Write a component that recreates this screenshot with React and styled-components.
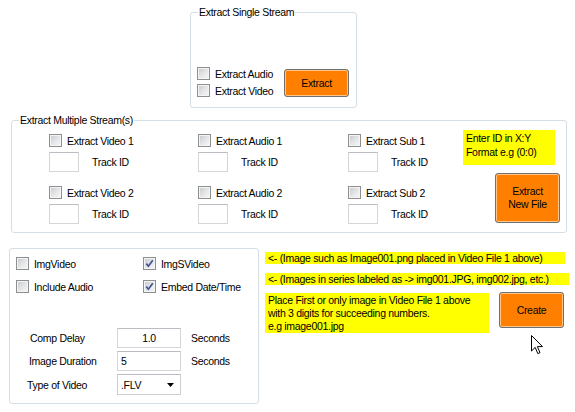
import React from 'react';
import styled, { createGlobalStyle } from 'styled-components';

const GlobalStyle = createGlobalStyle`
  html, body {
    margin: 0;
    padding: 0;
    background: #fff;
  }
  body {
    font-family: "Liberation Sans", Arial, sans-serif;
    font-size: 10.5px;
    letter-spacing: -0.3px;
    color: #000;
  }
`;

const Form = styled.div`
  position: relative;
  width: 575px;
  height: 412px;
  overflow: hidden;
  box-sizing: border-box;
  padding-top: 6px;
  background: #fff;
  display: flex;
  flex-direction: column;
  align-items: flex-start;
`;

const GroupBox = styled.fieldset`
  margin: 0;
  padding: 0;
  min-width: 0;
  box-sizing: border-box;
  border: 1px solid #d5dfe5;
  border-radius: 3px;
`;

const GroupTitle = styled.legend`
  margin-left: 7px;
  padding: 0 1px;
  height: 13px;
  line-height: 13px;
`;

/* ---------- shared controls ---------- */

const CheckRow = styled.label`
  display: flex;
  align-items: center;
  gap: 5px;
  height: 17px;
  white-space: nowrap;
`;

const Box = styled.span`
  position: relative;
  flex: none;
  width: 13px;
  height: 13px;
  box-sizing: border-box;
  border: 1px solid #8e8f8f;
  background: linear-gradient(135deg, #c4c8cd 0%, #e6e7e9 55%, #f7f7f7 100%);
  box-shadow: inset 0 0 0 1px #f4f4f4;
`;

const Tick = styled.svg`
  position: absolute;
  left: 1px;
  top: 1px;
`;

const CheckBox = ({ label, checked }) => (
  <CheckRow>
    <Box>
      {checked && (
        <Tick width="9" height="9" viewBox="0 0 9 9">
          <path d="M1.3 4.6 L3.4 7.2 L7.8 1.3" fill="none" stroke="#3d5593" strokeWidth="1.7" />
        </Tick>
      )}
    </Box>
    {label}
  </CheckRow>
);

const TextBox = styled.div`
  flex: none;
  box-sizing: border-box;
  width: ${p => p.width}px;
  height: 20px;
  border: 1px solid #d6d6d6;
  border-top-color: #b9bcc2;
  background: #fff;
  padding: 0 3px;
  line-height: 18px;
  text-align: ${p => p.align || 'left'};
`;

const OrangeButton = styled.button`
  flex: none;
  width: ${p => p.width}px;
  height: ${p => p.height}px;
  margin: 0;
  padding: 0;
  border: 1px solid #707070;
  border-radius: 3px;
  background: #ff8000;
  box-shadow: inset 0 0 0 1px #ffc58a;
  font-family: inherit;
  font-size: inherit;
  letter-spacing: inherit;
  line-height: 13px;
  color: #000;
`;

/* ---------- single stream ---------- */

const SingleGroup = styled(GroupBox)`
  margin-left: 190px;
  width: 167px;
`;

const SingleBody = styled.div`
  height: 88px;
  box-sizing: border-box;
  display: flex;
  align-items: flex-end;
  justify-content: space-between;
  padding: 0 7px 0 6px;
`;

const CheckStack = styled.div`
  display: flex;
  flex-direction: column;
  padding-bottom: 8px;
`;

const ExtractButton = styled(OrangeButton)`
  margin-bottom: 10px;
`;

/* ---------- multiple streams ---------- */

const MultiGroup = styled(GroupBox)`
  margin: 6px 0 0 11px;
  width: 556px;
`;

const MultiBody = styled.div`
  height: 105px;
  box-sizing: border-box;
  display: grid;
  grid-template-columns: 149px 150px 115px 102px;
  padding: 3px 0 0 37px;
`;

const StreamColumn = styled.div`
  display: flex;
  flex-direction: column;
  gap: 12px;
  padding-top: 2px;
`;

const StreamItem = styled.div`
  display: flex;
  flex-direction: column;
  gap: 3px;
`;

const TrackRow = styled.div`
  display: flex;
  align-items: center;
  gap: 13px;
  height: 20px;
`;

const NoteColumn = styled.div`
  display: flex;
  flex-direction: column;
  align-items: flex-start;
`;

const Note = styled.div`
  box-sizing: border-box;
  width: ${p => p.width}px;
  height: ${p => p.height}px;
  margin-top: ${p => p.top || 0}px;
  padding: ${p => p.pad || 0}px 0 0 3px;
  background: #ffff00;
  line-height: ${p => p.lh || 13}px;
  white-space: nowrap;
`;

const NewFileButton = styled(OrangeButton)`
  margin: 8px 0 0 32px;
`;

/* ---------- image video ---------- */

const BottomRow = styled.div`
  display: flex;
  align-items: flex-start;
  margin-top: 15px;
`;

const OptionsGroup = styled(GroupBox)`
  margin-left: 9px;
  width: 250px;
  height: 156px;
`;

const OptionsBody = styled.div`
  display: flex;
  flex-direction: column;
  padding: 6px 0 0 6px;
`;

const OptionGrid = styled.div`
  display: grid;
  grid-template-columns: 127px auto;
  row-gap: 6px;
`;

const FieldList = styled.div`
  display: flex;
  flex-direction: column;
  gap: 3px;
  margin-top: 33px;
`;

const FieldRow = styled.div`
  display: flex;
  align-items: center;
  height: ${p => p.height || 20}px;
`;

const FieldLabel = styled.span`
  box-sizing: border-box;
  width: 101px;
  padding-left: ${p => p.indent}px;
`;

const Unit = styled.span`
  margin-left: 10px;
`;

const Combo = styled.div`
  box-sizing: border-box;
  width: 64px;
  height: 21px;
  border: 1px solid #cfcfcf;
  border-top-color: #b9bcc2;
  background: #fff;
  display: flex;
  align-items: center;
  justify-content: space-between;
  padding: 0 6px 0 3px;
`;

const RightColumn = styled.div`
  display: flex;
  flex-direction: column;
  align-items: flex-start;
  margin: 4px 0 0 6px;
`;

const CreateRow = styled.div`
  display: flex;
  align-items: flex-start;
  gap: 10px;
  margin-top: 7px;
`;

const Cursor = styled.svg`
  position: absolute;
  left: 531px;
  top: 335px;
`;

const streams = [
  ['Extract Video 1', 'Extract Video 2'],
  ['Extract Audio 1', 'Extract Audio 2'],
  ['Extract Sub 1', 'Extract Sub 2'],
];

export default function App() {
  return (
    <>
      <GlobalStyle />
      <Form>
        <SingleGroup>
          <GroupTitle>Extract Single Stream</GroupTitle>
          <SingleBody>
            <CheckStack>
              <CheckBox label="Extract Audio" />
              <CheckBox label="Extract Video" />
            </CheckStack>
            <ExtractButton width={65} height={28}>Extract</ExtractButton>
          </SingleBody>
        </SingleGroup>

        <MultiGroup>
          <GroupTitle>Extract Multiple Stream(s)</GroupTitle>
          <MultiBody>
            {streams.map(col => (
              <StreamColumn key={col[0]}>
                {col.map(name => (
                  <StreamItem key={name}>
                    <CheckBox label={name} />
                    <TrackRow>
                      <TextBox width={30} />
                      Track ID
                    </TrackRow>
                  </StreamItem>
                ))}
              </StreamColumn>
            ))}
            <NoteColumn>
              <Note width={92} height={35} pad={1} lh={14}>
                Enter ID in X:Y<br />Format e.g (0:0)
              </Note>
              <NewFileButton width={65} height={50}>Extract<br />New File</NewFileButton>
            </NoteColumn>
          </MultiBody>
        </MultiGroup>

        <BottomRow>
          <OptionsGroup>
            <OptionsBody>
              <OptionGrid>
                <CheckBox label="ImgVideo" />
                <CheckBox label="ImgSVideo" checked />
                <CheckBox label="Include Audio" />
                <CheckBox label="Embed Date/Time" checked />
              </OptionGrid>
              <FieldList>
                <FieldRow>
                  <FieldLabel indent={14}>Comp Delay</FieldLabel>
                  <TextBox width={64} align="center">1.0</TextBox>
                  <Unit>Seconds</Unit>
                </FieldRow>
                <FieldRow>
                  <FieldLabel indent={13}>Image Duration</FieldLabel>
                  <TextBox width={64}>5</TextBox>
                  <Unit>Seconds</Unit>
                </FieldRow>
                <FieldRow height={21}>
                  <FieldLabel indent={11}>Type of Video</FieldLabel>
                  <Combo>
                    .FLV
                    <svg width="7" height="4" viewBox="0 0 7 4">
                      <path d="M0 0 H7 L3.5 4 Z" fill="#000" />
                    </svg>
                  </Combo>
                </FieldRow>
              </FieldList>
            </OptionsBody>
          </OptionsGroup>

          <RightColumn>
            <Note width={300} height={12} lh={12}>
              {'<- (Image such as Image001.png placed in Video File 1 above)'}
            </Note>
            <Note width={304} height={12} lh={12} top={9}>
              {'<- (Images in series labeled as -> img001.JPG, img002.jpg, etc.)'}
            </Note>
            <CreateRow>
              <Note width={224} height={40} pad={1} top={1}>
                Place First or only image in Video File 1 above<br />
                with 3 digits for succeeding numbers.<br />
                e.g image001.jpg
              </Note>
              <OrangeButton width={65} height={36}>Create</OrangeButton>
            </CreateRow>
          </RightColumn>
        </BottomRow>

        <Cursor width="13" height="20" viewBox="0 0 13 20">
          <path d="M0.5 0.5 V16 L4.2 12.4 L6.8 18.6 L9 17.7 L6.4 11.6 H11.5 Z" fill="#fff" stroke="#000" strokeWidth="1" strokeLinejoin="miter" />
        </Cursor>
      </Form>
    </>
  );
}
